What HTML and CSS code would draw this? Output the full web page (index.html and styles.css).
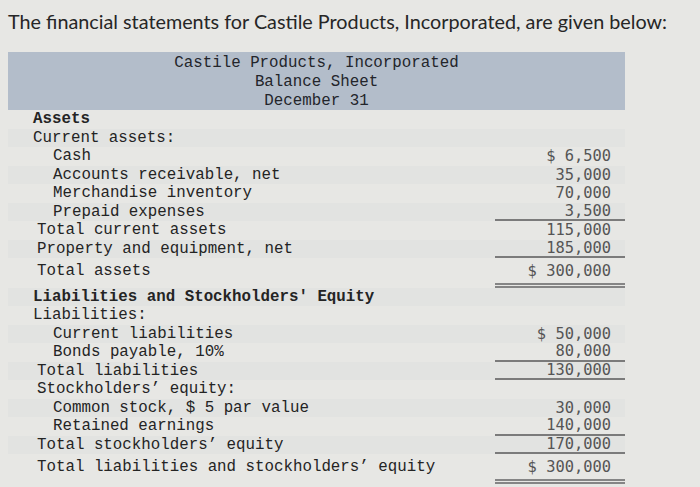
FILE: index.html
```html
<!DOCTYPE html>
<html lang="en">
<head>
<meta charset="utf-8">
<title>Castile Products Balance Sheet</title>
<link rel="stylesheet" href="styles.css">
</head>
<body>
<p class="intro">The financial statements for Castile Products, Incorporated, are given below:</p>
<div class="sheet">
  <div class="sheet-head">
    <div>Castile Products, Incorporated</div>
    <div>Balance Sheet</div>
    <div>December 31</div>
  </div>
  <div class="rows">
    <div class="row"><span class="lbl l0 bold">Assets</span><span class="amt"></span></div>
    <div class="row"><span class="lbl l0">Current assets:</span><span class="amt"></span></div>
    <div class="row"><span class="lbl l1">Cash</span><span class="amt">$ 6,500</span></div>
    <div class="row"><span class="lbl l1">Accounts receivable, net</span><span class="amt">35,000</span></div>
    <div class="row"><span class="lbl l1">Merchandise inventory</span><span class="amt">70,000</span></div>
    <div class="row"><span class="lbl l1">Prepaid expenses</span><span class="amt rule">3,500</span></div>
    <div class="row"><span class="lbl lt">Total current assets</span><span class="amt">115,000</span></div>
    <div class="row"><span class="lbl lt">Property and equipment, net</span><span class="amt rule">185,000</span></div>
    <div class="row grand"><span class="lbl lt">Total assets</span><span class="amt dbl">$ 300,000</span></div>
    <div class="row"><span class="lbl l0 bold">Liabilities and Stockholders' Equity</span><span class="amt"></span></div>
    <div class="row"><span class="lbl l0">Liabilities:</span><span class="amt"></span></div>
    <div class="row"><span class="lbl l1">Current liabilities</span><span class="amt">$ 50,000</span></div>
    <div class="row"><span class="lbl l1">Bonds payable, 10%</span><span class="amt rule">80,000</span></div>
    <div class="row"><span class="lbl lt">Total liabilities</span><span class="amt rule">130,000</span></div>
    <div class="row"><span class="lbl lt">Stockholders’ equity:</span><span class="amt"></span></div>
    <div class="row"><span class="lbl l1">Common stock, $ 5 par value</span><span class="amt">30,000</span></div>
    <div class="row"><span class="lbl l1">Retained earnings</span><span class="amt rule">140,000</span></div>
    <div class="row"><span class="lbl lt">Total stockholders’ equity</span><span class="amt rule">170,000</span></div>
    <div class="row grand"><span class="lbl lt">Total liabilities and stockholders’ equity</span><span class="amt dbl">$ 300,000</span></div>
  </div>
</div>
</body>
</html>
```
FILE: styles.css
```css
html, body {
  margin: 0;
  padding: 0;
  background: #e7e7e4;
}
body {
  width: 700px;
  height: 487px;
  overflow: hidden;
}
.intro {
  margin: 0;
  padding: 9px 0 0 8px;
  font-family: Lato, "Open Sans", sans-serif;
  font-size: 19.8px;
  line-height: 24px;
  color: #262626;
}
.sheet {
  margin: 19px 0 0 8px;
  width: 617px;
}
.sheet-head {
  background: #b3bdca;
  height: 58px;
  box-sizing: border-box;
  padding-top: 2px;
  text-align: center;
  font-family: "Liberation Mono", "Courier New", monospace;
  font-size: 15.8px;
  line-height: 19px;
  color: #23252b;
}
.rows {
  display: flex;
  flex-direction: column;
}
.row {
  display: grid;
  grid-template-columns: 1fr 130px;
  height: 18.5px;
  line-height: 18.5px;
}
.row:nth-child(even) {
  background: rgba(175, 188, 205, 0.07);
}
.lbl {
  font-family: "Liberation Mono", "Courier New", monospace;
  font-size: 15.8px;
  color: #242424;
  white-space: pre;
}
.bold {
  font-weight: bold;
}
.l0 { padding-left: 25px; }
.lt { padding-left: 29px; }
.l1 { padding-left: 45px; }
.amt {
  box-sizing: border-box;
  height: 100%;
  text-align: right;
  padding-right: 14px;
  font-family: "DejaVu Sans Mono", monospace;
  font-size: 15.4px;
  color: #555555;
  white-space: pre;
}
.amt.rule {
  border-bottom: 2px solid #7b7b7b;
  line-height: 16.5px;
}
.row.grand {
  height: auto;
  padding-top: 4px;
}
.row.grand .lbl {
  line-height: 18.5px;
}
.amt.dbl {
  height: auto;
  line-height: 18.5px;
  padding-bottom: 2px;
  border-bottom: 5px double #858585;
}
```
